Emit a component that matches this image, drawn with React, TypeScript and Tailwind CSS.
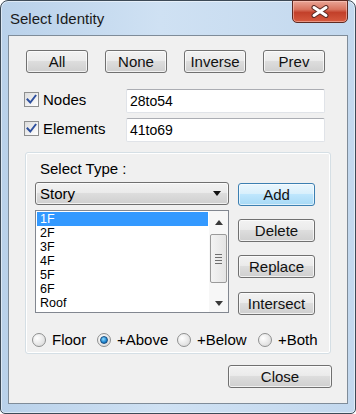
import React from "react";

function Btn({ children, className = "", def = false }: { children: React.ReactNode; className?: string; def?: boolean }) {
  return (
    <div
      className={
        def
          ? `flex items-center justify-center h-[23px] rounded-[3px] border border-[#3c7fb1] bg-[linear-gradient(#eaf6fd_0%,#d9f0fc_45%,#bee6fd_50%,#a7d9f5_100%)] shadow-[inset_0_0_0_1px_rgba(255,255,255,0.6)] text-[15px] leading-none text-[#111] ${className}`
          : `flex items-center justify-center h-[23px] rounded-[3px] border border-[#707070] bg-[linear-gradient(#f2f2f2_0%,#ebebeb_45%,#dddddd_50%,#cfcfcf_100%)] shadow-[inset_0_0_0_1px_rgba(255,255,255,0.7)] text-[15px] leading-none text-[#111] ${className}`
      }
    >
      {children}
    </div>
  );
}

function Check() {
  return (
    <div className="w-[15px] h-[15px] border border-[#8e8f8f] bg-[linear-gradient(135deg,#dcdcdc,#ffffff)] flex items-center justify-center shrink-0">
      <svg width="11" height="11" viewBox="0 0 11 11">
        <path d="M1.5 5.5 L4.3 8.5 L9.5 1.8" fill="none" stroke="#2d4f9e" strokeWidth="2" strokeLinecap="square" />
      </svg>
    </div>
  );
}

function Radio({ on = false }: { on?: boolean }) {
  return (
    <div className="w-[14px] h-[14px] rounded-full border border-[#8e8f8f] bg-[radial-gradient(circle_at_35%_35%,#ffffff,#d4d4d4)] flex items-center justify-center shrink-0">
      {on && (
        <div className="w-[8px] h-[8px] rounded-full border border-[#1b4f80] bg-[radial-gradient(circle_at_40%_35%,#8fdcff,#1c84d0_60%,#0b4f8f)]" />
      )}
    </div>
  );
}

function Field({ value }: { value: string }) {
  return (
    <div className="w-[199px] h-[24px] rounded-[2px] border border-[#e0e3e8] border-t-[#abadb3] bg-white flex items-center pl-[3px] text-[14px] text-black">
      {value}
    </div>
  );
}

export default function App() {
  const items = ["1F", "2F", "3F", "4F", "5F", "6F", "Roof"];
  return (
    <div className="w-[356px] h-[414px] font-['Liberation_Sans',Arial,sans-serif] text-black bg-white">
      <div className="w-[356px] h-[414px] rounded-t-[8px] rounded-b-[5px] border border-[#3d4a57] flex flex-col bg-[linear-gradient(90deg,#b9d1ea_0%,#cfe1f3_45%,#c3d8ee_100%)] shadow-[inset_0_0_0_1px_rgba(255,255,255,0.5)]">
        {/* title bar */}
        <div className="h-[34px] flex items-start justify-between shrink-0">
          <div className="mt-[9px] pl-[9px] text-[15px] leading-[17px] text-[#1a1a1a]">Select Identity</div>
          <div className="-mt-[1px] mr-[7px] w-[56px] h-[23px] rounded-b-[5px] border border-[#5e2a22] bg-[linear-gradient(#e9a596_0%,#d9745f_40%,#c2402a_55%,#d65a3f_100%)] shadow-[inset_0_0_0_1px_rgba(255,210,200,0.5)] flex items-center justify-center">
            <svg width="18" height="13" viewBox="0 0 18 13">
              <path d="M3 2.5 L15 10.5 M15 2.5 L3 10.5" stroke="#5a2a24" strokeWidth="5" strokeLinecap="round" />
              <path d="M3 2.5 L15 10.5 M15 2.5 L3 10.5" stroke="#ffffff" strokeWidth="3" strokeLinecap="round" />
            </svg>
          </div>
        </div>
        {/* client */}
        <div className="flex-1 mx-[7px] mb-[9px] border border-[#7f8c99] bg-[#f0f0f0] flex flex-col">
          <div className="mt-[14px] pl-[17px] flex gap-[17px]">
            <Btn className="w-[62px]">All</Btn>
            <Btn className="w-[62px]">None</Btn>
            <Btn className="w-[62px]">Inverse</Btn>
            <Btn className="w-[62px]">Prev</Btn>
          </div>
          <div className="mt-[16px] pl-[15px] flex items-center h-[24px]">
            <div className="w-[102px] flex items-center -mt-[3px]">
              <Check />
              <span className="ml-[4px] text-[15px] leading-[17px]">Nodes</span>
            </div>
            <Field value="28to54" />
          </div>
          <div className="mt-[5px] pl-[15px] flex items-center h-[24px]">
            <div className="w-[102px] flex items-center -mt-[3px]">
              <Check />
              <span className="ml-[4px] text-[15px] leading-[17px]">Elements</span>
            </div>
            <Field value="41to69" />
          </div>
          {/* group */}
          <div className="mt-[10px] ml-[16px] w-[306px] h-[202px] rounded-[3px] border border-[#d5dfe5] shadow-[inset_0_0_0_1px_#ffffff] flex flex-col">
            <div className="ml-[9px] flex flex-col">
              <div className="mt-[7px] ml-[5px] text-[15px] leading-[17px]">Select Type :</div>
              <div className="mt-[5px] flex">
                <div className="w-[194px] flex flex-col">
                  <div className="h-[23px] rounded-[3px] border border-[#707070] bg-[linear-gradient(#f2f2f2_0%,#ebebeb_45%,#dddddd_50%,#cfcfcf_100%)] shadow-[inset_0_0_0_1px_rgba(255,255,255,0.7)] flex items-center justify-between pl-[4px] pr-[7px]">
                    <span className="text-[15px] leading-none">Story</span>
                    <svg width="8" height="5" viewBox="0 0 8 5">
                      <path d="M0 0 L8 0 L4 5 Z" fill="#111" />
                    </svg>
                  </div>
                  <div className="mt-[5px] h-[103px] border border-[#828790] bg-white flex">
                    <div className="flex-1 pt-[1px] pl-[1px] flex flex-col">
                      {items.map((it, i) => (
                        <div
                          key={it}
                          className={
                            i === 0
                              ? "h-[14px] bg-[#3399ff] text-white text-[12.5px] leading-[14px] pl-[3px] overflow-hidden"
                              : "h-[14px] text-black text-[12.5px] leading-[14px] pl-[3px] overflow-hidden"
                          }
                        >
                          {it}
                        </div>
                      ))}
                    </div>
                    <div className="w-[19px] ml-[1px] bg-[#f7f7f7] flex flex-col items-center">
                      <div className="h-[18px] w-full flex items-center justify-center mt-[2px]">
                        <svg width="8" height="5" viewBox="0 0 8 5">
                          <path d="M0 5 L8 5 L4 0 Z" fill="#3a3a3a" />
                        </svg>
                      </div>
                      <div className="mt-[3px] w-[17px] h-[49px] rounded-[2px] border border-[#9a9a9a] bg-[linear-gradient(90deg,#f3f3f3,#e4e4e4)] flex flex-col items-center justify-center gap-[2px]">
                        <div className="w-[7px] h-[1px] bg-[#6f6f6f]" />
                        <div className="w-[7px] h-[1px] bg-[#6f6f6f]" />
                        <div className="w-[7px] h-[1px] bg-[#6f6f6f]" />
                        <div className="w-[7px] h-[1px] bg-[#6f6f6f]" />
                      </div>
                      <div className="flex-1" />
                      <div className="h-[18px] w-full flex items-center justify-center">
                        <svg width="8" height="5" viewBox="0 0 8 5">
                          <path d="M0 0 L8 0 L4 5 Z" fill="#3a3a3a" />
                        </svg>
                      </div>
                    </div>
                  </div>
                </div>
                <div className="ml-[9px] w-[77px] pt-[1px] flex flex-col">
                  <Btn def>Add</Btn>
                  <Btn className="mt-[13px]">Delete</Btn>
                  <Btn className="mt-[13px]">Replace</Btn>
                  <Btn className="mt-[14px]">Intersect</Btn>
                </div>
              </div>
            </div>
            <div className="mt-[16px] ml-[6px] flex items-center h-[17px] text-[15px] leading-[17px]">
              <div className="w-[65px] flex items-center">
                <Radio />
                <span className="ml-[6px]">Floor</span>
              </div>
              <div className="w-[80px] flex items-center">
                <Radio on />
                <span className="ml-[6px]">+Above</span>
              </div>
              <div className="w-[81px] flex items-center">
                <Radio />
                <span className="ml-[6px]">+Below</span>
              </div>
              <div className="flex items-center">
                <Radio />
                <span className="ml-[6px]">+Both</span>
              </div>
            </div>
          </div>
          <Btn className="mt-[11px] self-end mr-[15px] w-[104px]">Close</Btn>
        </div>
      </div>
    </div>
  );
}
